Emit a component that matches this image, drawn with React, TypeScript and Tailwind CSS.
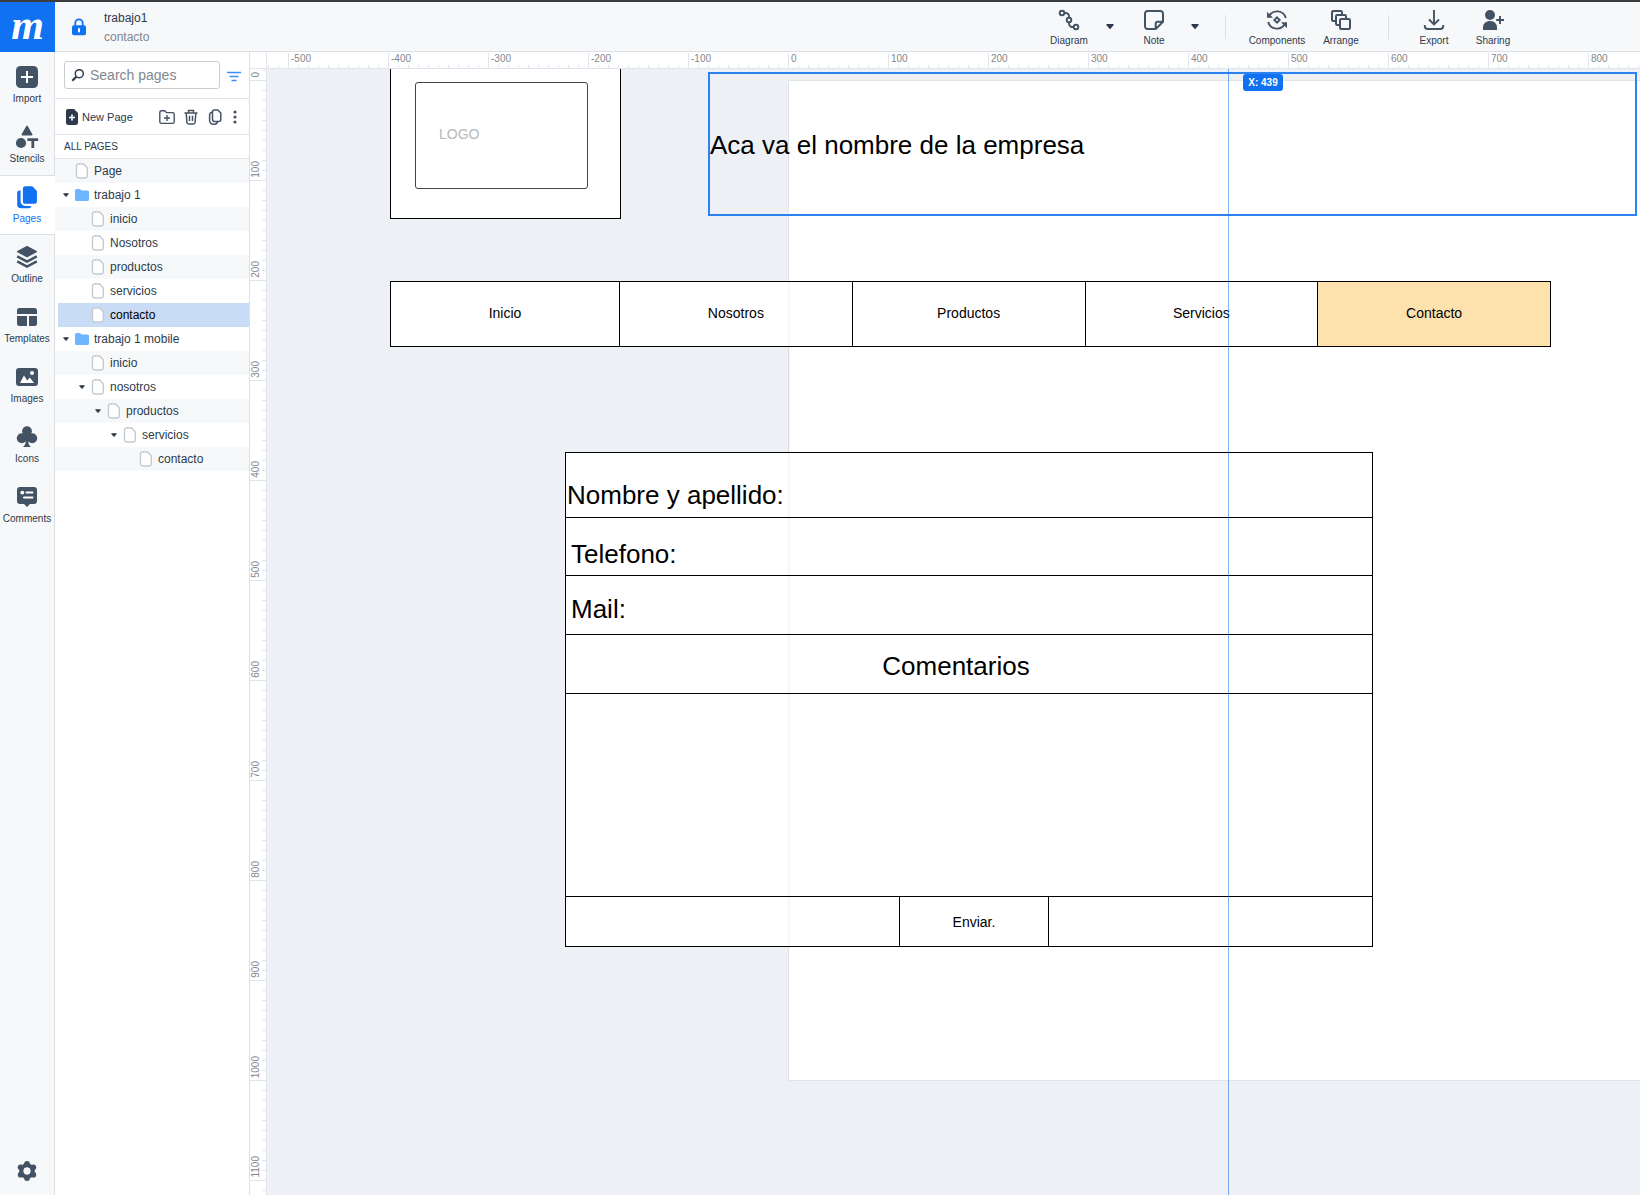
import React, { useEffect, useState } from "react";

type IconProps = { className?: string };
type Children = { children: React.ReactNode };

function Glyph({ children }: Children) {
  return (
    <svg viewBox="0 0 24 24" className="size-6 shrink-0" fill="currentColor" aria-hidden="true">
      {children}
    </svg>
  );
}

/* ---------- Rail icons ---------- */

const ImportIcon = () => (
  <Glyph>
    <rect x="1" y="1" width="22" height="22" rx="4.5" />
    <path d="M12 6v12M6 12h12" stroke="#fff" strokeWidth="2" fill="none" />
  </Glyph>
);

const StencilsIcon = () => (
  <Glyph>
    <path d="M12 1.4 16.7 9.6H7.3Z" stroke="currentColor" strokeWidth="1.6" strokeLinejoin="round" />
    <circle cx="6" cy="18" r="5.1" />
    <path d="M12.4 14.6h10.8M17.8 14.6V23" stroke="currentColor" strokeWidth="2.8" fill="none" />
  </Glyph>
);

const PagesIcon = () => (
  <Glyph>
    <path d="M10.5 1.2h6.8l4.6 4.7v10.3a2.6 2.6 0 0 1-2.6 2.6h-8.8a2.6 2.6 0 0 1-2.6-2.6V3.8a2.6 2.6 0 0 1 2.6-2.6Z" />
    <path d="M4.400 5.600h1.200v10.800a4.500 4.500 0 0 0 4.500 4.500h6.200a2.600 2.600 0 0 1-2.600 2.300H6a3.800 3.800 0 0 1-3.800-3.800V7.800a2.200 2.200 0 0 1 2.200-2.200Z" />
  </Glyph>
);

const OutlineIcon = () => (
  <Glyph>
    <path d="M12 1.6 21.4 6.6 12 11.8 2.6 6.6Z" stroke="currentColor" strokeWidth="1.2" strokeLinejoin="round" />
    <path d="m2.2 11.4 9.8 5.3 9.8-5.3M2.2 16.3l9.8 5.3 9.8-5.3" stroke="currentColor" strokeWidth="2.5" fill="none" />
  </Glyph>
);

const TemplatesIcon = () => (
  <Glyph>
    <path d="M4.5 3h15A2.5 2.5 0 0 1 22 5.5V9H2V5.5A2.5 2.5 0 0 1 4.5 3ZM2 11h10v10H4.5A2.5 2.5 0 0 1 2 18.5ZM14 11h8v7.5a2.5 2.5 0 0 1-2.5 2.5H14Z" />
  </Glyph>
);

const ImagesIcon = () => (
  <Glyph>
    <rect x="1" y="3" width="22" height="18" rx="3" />
    <path d="m5 18 4-7.4 3.2 4.8 2.6-3L19 18Z" fill="#fff" />
    <circle cx="17" cy="8" r="2" fill="#fff" />
  </Glyph>
);

const ClubIcon = () => (
  <Glyph>
    <circle cx="12" cy="6.2" r="4.9" />
    <circle cx="6.8" cy="13.2" r="5" />
    <circle cx="17.2" cy="13.2" r="5" />
    <path d="M10.6 8h2.8v9c0 2 1 3.6 2.6 5H8c1.6-1.4 2.6-3 2.6-5Z" />
  </Glyph>
);

const CommentsIcon = () => (
  <Glyph>
    <path d="M5 2h14a3 3 0 0 1 3 3v11a3 3 0 0 1-3 3h-4l-3 2.9L9 19H5a3 3 0 0 1-3-3V5a3 3 0 0 1 3-3Z" />
    <circle cx="7.3" cy="7.6" r="1.9" fill="#fff" />
    <path d="M11.5 7.6h6M9 12.6h8.5" stroke="#fff" strokeWidth="2" strokeLinecap="round" fill="none" />
  </Glyph>
);

const GearIcon = () => (
  <Glyph>
    <circle cx="12" cy="12" r="5.6" fill="none" stroke="currentColor" strokeWidth="4.4" />
    <circle cx="12" cy="5" r="2.9" />
    <circle cx="12" cy="19" r="2.9" />
    <circle cx="5.7" cy="8.3" r="2.9" />
    <circle cx="18.3" cy="8.3" r="2.9" />
    <circle cx="5.7" cy="15.7" r="2.9" />
    <circle cx="18.3" cy="15.7" r="2.9" />
    <circle cx="12" cy="12" r="3.4" fill="#f7f8fa" />
  </Glyph>
);

/* ---------- Toolbar icons ---------- */

const DiagramIcon = () => (
  <Glyph>
    <g fill="none" stroke="currentColor" strokeWidth="1.9">
      <circle cx="5" cy="5" r="2.3" />
      <circle cx="12" cy="12" r="2.3" />
      <circle cx="19" cy="19" r="2.3" />
      <path d="M7.3 5h1.5A3.2 3.2 0 0 1 12 8.2v1.5M12 14.3v1.5a3.2 3.2 0 0 0 3.2 3.2h1.5" />
    </g>
  </Glyph>
);

const NoteIcon = () => (
  <Glyph>
    <path
      d="M5.5 3h13A2.5 2.5 0 0 1 21 5.5v8.2L13.7 21H5.5A2.5 2.5 0 0 1 3 18.5v-13A2.5 2.5 0 0 1 5.5 3ZM13.7 21v-5.3a2 2 0 0 1 2-2H21"
      fill="none"
      stroke="currentColor"
      strokeWidth="2"
      strokeLinejoin="round"
    />
  </Glyph>
);

const ComponentsIcon = () => (
  <Glyph>
    <g fill="none" stroke="currentColor" strokeWidth="1.9">
      <path d="M4 8.5A9 9 0 0 1 20.8 10M20 15.5A9 9 0 0 1 3.2 14" />
      <path d="m12 9.3 2.7 2.7-2.7 2.7L9.3 12Z" />
    </g>
    <path d="M2 3.8v6h6ZM22 20.2v-6h-6Z" />
  </Glyph>
);

const ArrangeIcon = () => (
  <Glyph>
    <g fill="#f7f8fa" stroke="currentColor" strokeWidth="2">
      <rect x="3" y="3" width="10" height="10" rx="1.2" />
      <rect x="7" y="7" width="10" height="10" rx="1.2" />
      <rect x="11" y="11" width="10" height="10" rx="1.2" />
    </g>
  </Glyph>
);

const ExportIcon = () => (
  <Glyph>
    <path
      d="M12 2v14M7 11.5l5 5 5-5M2.8 17v1.5A3 3 0 0 0 5.8 21h12.4a3 3 0 0 0 3-2.5V17"
      fill="none"
      stroke="currentColor"
      strokeWidth="1.9"
    />
  </Glyph>
);

const SharingIcon = () => (
  <Glyph>
    <circle cx="9" cy="7" r="5" />
    <path d="M2 22v-2.5C2 15.5 5 13 9 13s7 2.5 7 6.5V22Z" />
    <path d="M19 8v8M15.2 12h7.8" stroke="currentColor" strokeWidth="1.9" />
  </Glyph>
);

const Caret = ({ className }: IconProps) => (
  <svg viewBox="0 0 8 5" className={className} fill="currentColor" aria-hidden="true">
    <path d="M1 0h6a.7.7 0 0 1 .5 1.2L4.5 4.7a.7.7 0 0 1-1 0L.5 1.2A.7.7 0 0 1 1 0Z" />
  </svg>
);

/* ---------- Panel icons ---------- */

const PageIcon = () => (
  <svg viewBox="0 0 16 16" className="size-4 shrink-0" aria-hidden="true">
    <path
      d="M4.5 1h5.3L13.3 5v7.7a2.3 2.3 0 0 1-2.3 2.3H4.8a2.3 2.3 0 0 1-2.3-2.3V3a2 2 0 0 1 2-2Z"
      fill="#fff"
      stroke="#c6cad0"
      strokeWidth="1.4"
    />
  </svg>
);

const FolderIcon = () => (
  <svg viewBox="0 0 16 16" className="size-4 shrink-0" fill="#6fb4ff" aria-hidden="true">
    <path d="M2.6 2h3.2l1.9 1.6h5.7A1.6 1.6 0 0 1 15 5.2v7.2a1.6 1.6 0 0 1-1.6 1.6H2.6A1.6 1.6 0 0 1 1 12.4V3.6A1.6 1.6 0 0 1 2.6 2Z" />
  </svg>
);

/* ---------- Header ---------- */

function Tool({ label, width, children }: Children & { label: string; width: string }) {
  return (
    <button type="button" className={`flex flex-col items-center gap-[3px] pt-0.5 text-[#445364] ${width}`}>
      {children}
      <span className="text-[10px] leading-3 text-[#2c3a4b]">{label}</span>
    </button>
  );
}

function Header() {
  return (
    <header className="flex h-[50px] shrink-0 bg-[#f7f8fa]">
      <a
        href="#home"
        aria-label="Home"
        className="flex w-[55px] shrink-0 justify-center bg-[#1071f2] font-['Liberation_Serif',serif] text-[42px] leading-[46px] font-bold text-white italic"
      >
        m
      </a>
      <div className="flex flex-1 items-center border-b border-[#dcdfe4]">
        <svg viewBox="0 0 16 18" className="ml-4 h-[18px] w-4 shrink-0 text-[#1071f2]" aria-hidden="true">
          <path d="M4.3 8V5a3.7 3.7 0 0 1 7.4 0v3" fill="none" stroke="currentColor" strokeWidth="1.8" />
          <rect x="1" y="7.3" width="14" height="10" rx="2" fill="currentColor" />
          <path d="M8 11v2.6" stroke="#fff" strokeWidth="2" strokeLinecap="round" />
        </svg>
        <div className="ml-[17px] pt-0.5 text-xs">
          <h1 className="text-[#2c3a4b]">trabajo1</h1>
          <p className="mt-[3px] text-[#7f878f]">contacto</p>
        </div>
        <div className="ml-auto flex items-center pr-[115px]">
          <Tool label="Diagram" width="w-12">
            <DiagramIcon />
          </Tool>
          <button type="button" aria-label="Diagram options" className="flex w-[34px] justify-center text-[#2c3a4b]">
            <Caret className="h-[5px] w-2" />
          </button>
          <Tool label="Note" width="w-[54px]">
            <NoteIcon />
          </Tool>
          <button type="button" aria-label="Note options" className="flex w-7 justify-center text-[#2c3a4b]">
            <Caret className="h-[5px] w-2" />
          </button>
          <div className="mx-4 h-6 w-px bg-[#dcdfe4]" />
          <Tool label="Components" width="w-[70px]">
            <ComponentsIcon />
          </Tool>
          <Tool label="Arrange" width="w-[58px]">
            <ArrangeIcon />
          </Tool>
          <div className="mx-[18px] h-6 w-px bg-[#dcdfe4]" />
          <Tool label="Export" width="w-[54px]">
            <ExportIcon />
          </Tool>
          <Tool label="Sharing" width="w-16">
            <SharingIcon />
          </Tool>
        </div>
      </div>
    </header>
  );
}

/* ---------- Left rail ---------- */

const railItems = [
  { label: "Import", Icon: ImportIcon },
  { label: "Stencils", Icon: StencilsIcon },
  { label: "Pages", Icon: PagesIcon, active: true },
  { label: "Outline", Icon: OutlineIcon },
  { label: "Templates", Icon: TemplatesIcon },
  { label: "Images", Icon: ImagesIcon },
  { label: "Icons", Icon: ClubIcon },
  { label: "Comments", Icon: CommentsIcon },
];

function Rail() {
  return (
    <nav className="flex w-[55px] shrink-0 flex-col bg-[#f7f8fa] text-[#445364]">
      <div className="h-[3px] border-r border-[#dcdfe4]" />
      {railItems.map(({ label, Icon, active }) => (
        <button
          key={label}
          type="button"
          className={
            active
              ? "flex h-[60px] flex-col items-center gap-1 border-y border-[#dcdfe4] bg-white pt-[9px] pr-px text-[#1071f2]"
              : "flex h-[60px] flex-col items-center gap-1 border-r border-[#dcdfe4] pt-2.5"
          }
        >
          <Icon />
          <span className={active ? "text-[10px] leading-3" : "text-[10px] leading-3 text-[#2c3a4b]"}>{label}</span>
        </button>
      ))}
      <div className="flex-1 border-r border-[#dcdfe4]" />
      <button
        type="button"
        aria-label="Settings"
        className="flex h-12 items-center justify-center border-r border-[#dcdfe4]"
      >
        <GearIcon />
      </button>
    </nav>
  );
}

/* ---------- Pages panel ---------- */

const indents = ["pl-0", "pl-4", "pl-8", "pl-12", "pl-16"];

const tree = [
  { name: "Page", depth: 0 },
  { name: "trabajo 1", depth: 0, folder: true, open: true },
  { name: "inicio", depth: 1 },
  { name: "Nosotros", depth: 1 },
  { name: "productos", depth: 1 },
  { name: "servicios", depth: 1 },
  { name: "contacto", depth: 1, selected: true },
  { name: "trabajo 1 mobile", depth: 0, folder: true, open: true },
  { name: "inicio", depth: 1 },
  { name: "nosotros", depth: 1, open: true },
  { name: "productos", depth: 2, open: true },
  { name: "servicios", depth: 3, open: true },
  { name: "contacto", depth: 4 },
];

function PagesPanel() {
  return (
    <aside className="flex w-[195px] shrink-0 flex-col border-r border-[#dcdfe4] bg-white text-[#2c3a4b]">
      <div className="flex h-[47px] items-center border-b border-[#e3e5ec] pl-[9px]">
        <label className="flex h-7 w-[156px] items-center rounded-[3px] border border-[#c9cdd2] pl-1.5">
          <svg viewBox="0 0 14 14" className="size-3.5 shrink-0" fill="none" stroke="#2c3a4b" aria-hidden="true">
            <circle cx="8.3" cy="5.7" r="4" strokeWidth="1.5" />
            <path d="M5.3 8.7 1.3 12.7" strokeWidth="2.2" />
          </svg>
          <input
            type="text"
            aria-label="Search pages"
            placeholder="Search pages"
            className="ml-[5px] w-full min-w-0 bg-transparent text-sm outline-none placeholder:text-[#7f878f]"
          />
        </label>
        <button type="button" aria-label="Filter" className="ml-1.5 flex size-4 items-center justify-center">
          <svg viewBox="0 0 16 16" className="size-4" stroke="#3d8bf5" strokeWidth="1.7" aria-hidden="true">
            <path d="M1 5.5h14M3.5 9.5h9M5.5 13.5h5" />
          </svg>
        </button>
      </div>

      <div className="flex h-9 items-center border-b border-[#e3e5ec] pl-2.5">
        <button type="button" className="flex items-center gap-[3px] text-[11px] leading-4">
          <svg viewBox="0 0 14 16" className="h-4 w-3.5" aria-hidden="true">
            <path d="M3 0h6l4 4v9.5a2.5 2.5 0 0 1-2.5 2.5h-7A2.5 2.5 0 0 1 1 13.5V2a2 2 0 0 1 2-2Z" fill="#2c3a4b" />
            <path d="M7 5.5v6M4 8.5h6" stroke="#fff" strokeWidth="1.6" />
          </svg>
          New Page
        </button>
        <div className="ml-auto flex items-center gap-2 pr-1.5 text-[#445364]">
          <button type="button" aria-label="New folder">
            <svg viewBox="0 0 16 16" className="size-4" fill="none" stroke="currentColor" strokeWidth="1.4" aria-hidden="true">
              <path d="M2.5 1.7h3.3l1.7 1.9h6A1.7 1.7 0 0 1 15.2 5.3v7.4a1.7 1.7 0 0 1-1.7 1.7h-11A1.7 1.7 0 0 1 .8 12.7V3.4a1.7 1.7 0 0 1 1.7-1.7ZM8 6v6M5 9h6" />
            </svg>
          </button>
          <button type="button" aria-label="Delete">
            <svg viewBox="0 0 16 16" className="size-4" fill="none" stroke="currentColor" strokeWidth="1.5" aria-hidden="true">
              <path d="M1.5 4h13M5.5 4V1.5h5V4M3.2 4l.7 9.5A1.7 1.7 0 0 0 5.6 15h4.8a1.7 1.7 0 0 0 1.7-1.5L12.8 4M6.5 6.7v5.3M9.5 6.7v5.3" />
            </svg>
          </button>
          <button type="button" aria-label="Duplicate">
            <svg viewBox="0 0 16 16" className="size-4" fill="none" stroke="currentColor" strokeWidth="1.5" aria-hidden="true">
              <path d="M7.5.9h3.3l3 3.2v6.4a2 2 0 0 1-2 2H7.5a2 2 0 0 1-2-2V2.9a2 2 0 0 1 2-2Z" />
              <path d="M5.5 3.2A2.7 2.7 0 0 0 2.6 5.9v5.6a3.7 3.7 0 0 0 3.7 3.7h1.500a2.8 2.8 0 0 0 2.7-2.5" />
            </svg>
          </button>
          <button type="button" aria-label="More" className="-ml-1">
            <svg viewBox="0 0 16 16" className="size-4" fill="currentColor" aria-hidden="true">
              <circle cx="8" cy="3" r="1.6" />
              <circle cx="8" cy="8" r="1.6" />
              <circle cx="8" cy="13" r="1.6" />
            </svg>
          </button>
        </div>
      </div>

      <h2 className="h-6 border-b border-[#e3e5ec] pl-[9px] text-[10px] leading-[23px]">ALL PAGES</h2>

      <ul>
        {tree.map((node, i) => (
          <li
            key={i}
            className={
              node.selected
                ? "border-l-[3px] border-white bg-[#c8dcf5] text-black"
                : "border-l-[3px] border-transparent odd:bg-[#f7f8fa]"
            }
          >
            <button type="button" className={`flex h-6 w-full items-center text-xs ${indents[node.depth]}`}>
              <span className="flex w-4 shrink-0 justify-center">
                {node.open && <Caret className="h-1 w-1.5" />}
              </span>
              {node.folder ? <FolderIcon /> : <PageIcon />}
              <span className="ml-1">{node.name}</span>
            </button>
          </li>
        ))}
      </ul>
    </aside>
  );
}

/* ---------- Rulers ---------- */

const STEP = 100;
const ORIGIN_X = 788;
const ORIGIN_Y = 80;

const tens = Array.from({ length: 10 }, (_, i) => i);

function useWindowSize() {
  const [size, setSize] = useState({ width: window.innerWidth, height: window.innerHeight });
  useEffect(() => {
    const update = () => setSize({ width: window.innerWidth, height: window.innerHeight });
    window.addEventListener("resize", update);
    return () => window.removeEventListener("resize", update);
  }, []);
  return size;
}

function HorizontalRuler() {
  const { width } = useWindowSize();
  const count = Math.ceil((width - ORIGIN_X) / STEP) + 6;
  const marks = Array.from({ length: count }, (_, i) => (i - 6) * STEP);
  return (
    <div className="flex h-[17px] min-w-0 flex-1 overflow-hidden border-b border-[#e3e5ec] bg-white">
      <div className="-ml-[79px] flex pt-px">
        {marks.map((mark, i) => (
          <div key={mark} className="relative flex w-[100px] shrink-0 items-end">
            {tens.map((t) => (
              <div key={t} className={t === 0 ? "h-full w-2.5 border-l border-[#e3e5ec]" : "h-[3px] w-2.5 border-l border-[#e3e5ec]"} />
            ))}
            {i > 0 && (
              <span className="absolute top-0 left-[3px] text-[10px] leading-[11px] text-[#7f878f]">{mark}</span>
            )}
          </div>
        ))}
      </div>
    </div>
  );
}

function VerticalRuler() {
  const { height } = useWindowSize();
  const count = Math.ceil((height - ORIGIN_Y) / STEP) + 1;
  const marks = Array.from({ length: count }, (_, i) => i * STEP);
  return (
    <div className="w-[17px] shrink-0 overflow-hidden border-r border-[#e3e5ec] bg-white">
      <div className="-mt-[88px]">
        {marks.map((mark) => (
          <div key={mark} className="relative flex h-[100px] flex-col items-end">
            {tens.map((t) => (
              <div key={t} className={t === 9 ? "h-2.5 w-full border-b border-[#e3e5ec]" : "h-2.5 w-1 border-b border-[#e3e5ec]"} />
            ))}
            {ORIGIN_Y + mark < height && (
              <span className="absolute bottom-[3px] left-0 rotate-180 text-[10px] leading-3 text-[#7f878f] [writing-mode:vertical-rl]">
                {mark}
              </span>
            )}
          </div>
        ))}
      </div>
    </div>
  );
}

/* ---------- Canvas ---------- */

const menu = ["Nosotros", "Productos", "Servicios"];

function Canvas() {
  return (
    <main className="relative min-w-0 flex-1 overflow-hidden bg-[#edf0f5] text-black">
      {/* Artboard */}
      <div className="absolute top-[11px] left-[521px] h-[1001px] w-[1400px] border border-[#e0e3e8] bg-white" />

      {/* Logo placeholder */}
      <div className="absolute -top-5 left-[123px] h-[170px] w-[231px] border border-black bg-white px-6 pt-8">
        <div className="flex h-[107px] w-[173px] items-center rounded-[3px] border border-[#444] pb-1 pl-[23px] text-sm text-[#b8b8b8]">
          LOGO
        </div>
      </div>

      {/* Selected company name */}
      <div className="absolute top-[3px] left-[441px] flex h-36 w-[929px] items-center border-2 border-[#2b82f0] pt-0.5 text-[26px] leading-8">
        Aca va el nombre de la empresa
      </div>

      {/* Navigation */}
      <nav className="absolute top-[212px] left-[123px] flex h-[66px] w-[1161px] border border-black bg-white text-sm">
        <a href="#Inicio" className="flex w-[229px] items-center justify-center border-r border-black pb-0.5">
          Inicio
        </a>
        {menu.map((item) => (
          <a key={item} href={`#${item}`} className="flex flex-1 items-center justify-center border-r border-black pb-0.5">
            {item}
          </a>
        ))}
        <a href="#Contacto" className="flex flex-1 items-center justify-center bg-[#fee2ae] pb-0.5">
          Contacto
        </a>
      </nav>

      {/* Contact form */}
      <form className="absolute top-[383px] left-[298px] w-[808px] divide-y divide-black border border-black bg-white text-[26px] leading-8">
        <div className="flex h-[65px] items-end pb-1.5 pl-px">
          <label htmlFor="nombre">Nombre y apellido:</label>
          <input id="nombre" type="text" className="min-w-0 flex-1 outline-none" />
        </div>
        <div className="flex h-[58px] items-end pb-[5px] pl-[5px]">
          <label htmlFor="telefono">Telefono:</label>
          <input id="telefono" type="tel" className="min-w-0 flex-1 outline-none" />
        </div>
        <div className="flex h-[59px] items-end pb-[9px] pl-[5px]">
          <label htmlFor="mail">Mail:</label>
          <input id="mail" type="email" className="min-w-0 flex-1 outline-none" />
        </div>
        <div className="flex h-[59px] items-end justify-center pr-[26px] pb-[11px]">
          <label htmlFor="comentarios">Comentarios</label>
        </div>
        <textarea id="comentarios" className="block h-[203px] w-full resize-none outline-none" />
        <div className="flex h-[49px] justify-center">
          <div className="w-[333px]" />
          <button type="submit" className="w-[150px] border-x border-black text-sm">
            Enviar.
          </button>
          <div className="flex-1" />
        </div>
      </form>

      {/* Artboard edge showing through the shapes */}
      <div className="pointer-events-none absolute top-[212px] left-[521px] h-[667px] w-0.5 bg-black/[0.03]" />

      {/* Cursor guide */}
      <div className="pointer-events-none absolute inset-y-0 left-[961px] w-px bg-[#1071f2]/55" />
      <div className="absolute top-[5px] left-[976px] flex h-[17px] w-10 items-center justify-center rounded-[3px] bg-[#1071f2] text-[10px] leading-3 font-bold text-white">
        X: 439
      </div>
    </main>
  );
}

export default function App() {
  return (
    <div className="flex h-screen flex-col overflow-hidden border-t-2 border-[#3a3b3d] bg-white font-['Liberation_Sans',Arial,sans-serif]">
      <Header />
      <div className="flex min-h-0 flex-1">
        <Rail />
        <PagesPanel />
        <div className="flex min-w-0 flex-1 flex-col">
          <div className="flex">
            <div className="h-[17px] w-[17px] shrink-0 border-r border-b border-[#e3e5ec] bg-white" />
            <HorizontalRuler />
          </div>
          <div className="flex min-h-0 flex-1">
            <VerticalRuler />
            <Canvas />
          </div>
        </div>
      </div>
    </div>
  );
}
